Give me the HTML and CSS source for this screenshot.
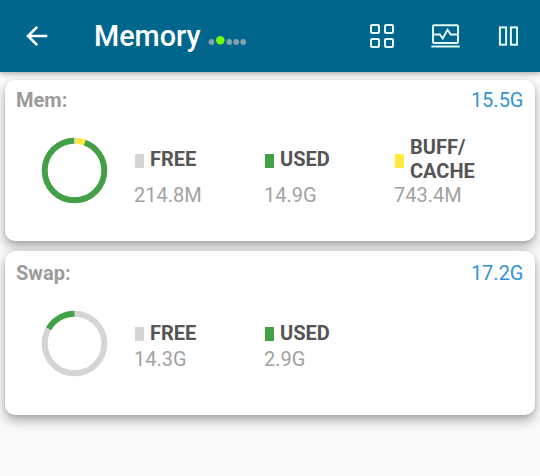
FILE: index.html
```html
<!DOCTYPE html>
<html lang="en">
<head>
<meta charset="utf-8">
<title>Memory</title>
<link rel="stylesheet" href="styles.css">
</head>
<body>
<header class="appbar">
  <svg class="back" width="24" height="24" viewBox="0 0 24 24"><path d="M22.3 12H3.5M12.2 2.8L3 12l9.2 9.2"/></svg>
  <h1 class="title">Memory</h1>
  <svg class="dots" width="40" height="12" viewBox="0 0 40 12"><circle cx="4.5" cy="7" r="2.9"/><circle class="active" cx="13.3" cy="5.3" r="4.2"/><circle cx="22.3" cy="7" r="2.9"/><circle cx="29.2" cy="7" r="2.9"/><circle cx="36.2" cy="7" r="2.9"/></svg>
  <nav class="actions">
    <svg width="24" height="24" viewBox="0 0 24 24"><rect x="1" y="1" width="8" height="8" rx="1"/><rect x="15" y="1" width="8" height="8" rx="1"/><rect x="1" y="15" width="8" height="8" rx="1"/><rect x="15" y="15" width="8" height="8" rx="1"/></svg>
    <svg width="30" height="24" viewBox="0 0 30 24"><rect x="2" y="1.3" width="25" height="17.7" rx="1"/><path d="M2.5 10.4h6.3l2.9 4 4.8-8.6 3.2 4.6h6.8M.3 22.6h28.4"/></svg>
    <svg width="20" height="24" viewBox="0 0 20 24"><rect x="1.9" y="3.4" width="6.2" height="17.3"/><rect x="12.9" y="3.4" width="6.2" height="17.3"/></svg>
  </nav>
</header>
<main class="cards">
  <section class="card">
    <div class="head"><h2>Mem:</h2><span class="total">15.5G</span></div>
    <div class="body">
      <svg class="ring" width="67" height="67" viewBox="0 0 67 67">
        <g transform="rotate(-90 33.5 33.5)">
          <circle class="used" cx="33.5" cy="33.5" r="29.8" pathLength="100" stroke-dasharray="94.5 5.5" stroke-dashoffset="-5.5"/>
          <circle class="buff" cx="33.5" cy="33.5" r="29.8" pathLength="100" stroke-dasharray="5.6 94.4"/>
          <circle class="free" cx="33.5" cy="33.5" r="29.8" pathLength="100" stroke-dasharray="1 99"/>
        </g>
      </svg>
      <dl class="stats">
        <div><dt><i class="swatch free"></i>FREE</dt><dd>214.8M</dd></div>
        <div><dt><i class="swatch used"></i>USED</dt><dd>14.9G</dd></div>
        <div><dt><i class="swatch buff"></i>BUFF/<br>CACHE</dt><dd>743.4M</dd></div>
      </dl>
    </div>
  </section>
  <section class="card swap">
    <div class="head"><h2>Swap:</h2><span class="total">17.2G</span></div>
    <div class="body">
      <svg class="ring" width="67" height="67" viewBox="0 0 67 67">
        <g transform="rotate(-90 33.5 33.5)">
          <circle class="free" cx="33.5" cy="33.5" r="29.8" pathLength="100" stroke-dasharray="83.2 16.8"/>
          <circle class="used" cx="33.5" cy="33.5" r="29.8" pathLength="100" stroke-dasharray="16.8 83.2" stroke-dashoffset="-83.2"/>
        </g>
      </svg>
      <dl class="stats">
        <div><dt><i class="swatch free"></i>FREE</dt><dd>14.3G</dd></div>
        <div><dt><i class="swatch used"></i>USED</dt><dd>2.9G</dd></div>
      </dl>
    </div>
  </section>
</main>
</body>
</html>
```
FILE: styles.css
```css
* { box-sizing: border-box; }
body { margin: 0; min-height: 476px; background: #fafafa; font-family: Roboto, sans-serif; font-size: 20px; line-height: 23.4px; }
h1, h2, dl, dd { margin: 0; }

.appbar { display: flex; align-items: center; height: 72px; padding: 0 22px 0 25px; background: #00668b; box-shadow: 0 2px 5px rgba(0, 0, 0, .3); }
.appbar svg { fill: none; stroke: #e2fbff; stroke-width: 2; }
.appbar .back { stroke: #fff; stroke-width: 2.6; }
.title { width: 109px; margin-left: 45px; color: #fff; font-size: 28.8px; font-weight: 500; line-height: 34px; }
.appbar .dots { margin: 9px 0 0 4px; fill: #83a0ae; stroke: none; }
.dots .active { fill: #76ff03; }
.actions { display: flex; align-items: center; gap: 37px; margin-left: auto; }

.cards { display: flex; flex-direction: column; gap: 10.5px; padding: 8px 5.5px 0 5px; }
.card { height: 160.5px; padding: 9px 11px 0; background: #fff; border-radius: 10px; box-shadow: 0 6px 12px rgba(0, 0, 0, .3), 0 1px 4px rgba(0, 0, 0, .12); }
.swap { height: 163.5px; padding-top: 11px; }
.head { display: flex; justify-content: space-between; }
.head h2 { color: #9b9b9b; font-size: 20px; font-weight: 700; }
.total { color: #3493d4; }
.body { display: flex; align-items: center; height: 71px; margin-top: 23px; padding-left: 25px; }

.ring { flex: none; }
.ring circle { fill: none; stroke-width: 6; }
.ring .used { stroke: #43a047; }
.ring .free { stroke: #d5d5d5; }
.ring .buff { stroke: #ffeb3b; }

.stats { display: grid; grid-template-columns: repeat(3, 130px); margin-left: 26px; padding-top: 1.5px; }
.stats > div { display: flex; flex-direction: column; }
.stats dt { display: flex; flex: 1; align-items: center; color: #555; font-weight: 700; line-height: 23.8px; }
.stats dd { color: #a2a2a2; font-weight: 400; }
.swap .stats { padding-top: 5px; }
.swap dd { margin-top: 2.5px; }
.swatch { width: 9px; height: 14px; margin: 2px 6px 0 1px; }
.swatch.free { background: #d5d5d5; }
.swatch.used { background: #43a047; }
.swatch.buff { background: #ffeb3b; }
```
